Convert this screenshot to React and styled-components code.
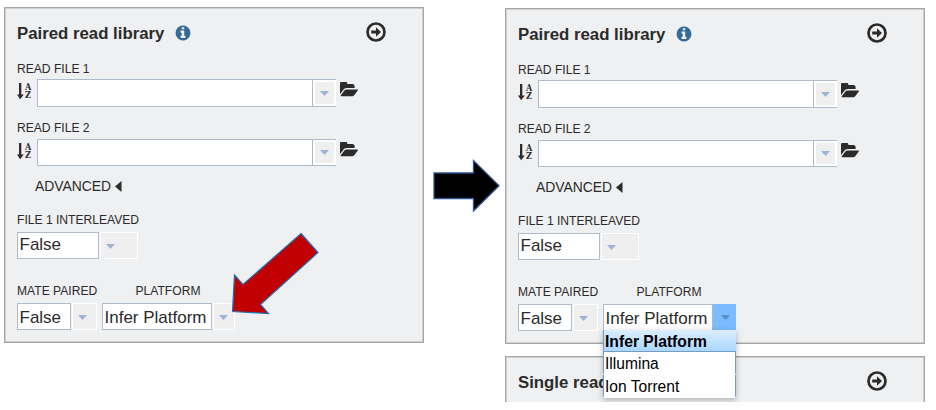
import React from "react";
import styled, { createGlobalStyle, css } from "styled-components";

const GlobalStyle = createGlobalStyle`
  * { box-sizing: border-box; }
  body {
    margin: 0;
    background: #fff;
    color: #2b2b2b;
    font-family: "Liberation Sans", Arial, sans-serif;
    overflow: hidden;
  }
  svg { display: block; flex: none; }
`;

const Page = styled.main`
  position: relative;
  display: flex;
  gap: 81px;
  width: 936px;
  height: 402px;
  padding-left: 4px;
  overflow: hidden;
`;

const Column = styled.div`
  display: flex;
  flex-direction: column;
  gap: 12px;
  width: 420px;
  padding-top: ${(p) => p.$top}px;
`;

const Panel = styled.section`
  flex: none;
  height: 336px;
  padding: 1px 1px 0 12px;
  background: #eff0f2;
  border: 1px solid #a6a6a6;
  box-shadow: inset 0 0 0 1px #cfcfd0;
`;

const Header = styled.header`
  display: flex;
  align-items: center;
  height: 47px;
  padding-right: 36px;
`;

const Title = styled.h2`
  margin: 0 11px 0 0;
  padding-top: 2px;
  font-size: 16.8px;
  line-height: 20px;
  font-weight: 700;
  white-space: nowrap;
`;

const Spacer = styled.div`
  flex: 1;
`;

const GoMark = styled.div`
  padding-bottom: 1px;
`;

const Label = styled.div`
  width: ${(p) => (p.$width ? p.$width + "px" : "auto")};
  height: 16px;
  font-size: 12.1px;
  line-height: 16px;
  white-space: nowrap;
`;

const FieldGroup = styled.div`
  height: ${(p) => p.$height}px;
  padding-top: ${(p) => p.$top}px;
`;

const FileRow = styled.div`
  display: flex;
  height: ${(p) => p.$height}px;
  margin-top: ${(p) => p.$gap}px;
`;

const SortMark = styled.div`
  display: flex;
  gap: 1px;
  width: 20px;
  padding-top: 3px;
`;

const SortLetters = styled.div`
  display: flex;
  flex-direction: column;
  font: 700 9px "DejaVu Serif", serif;
`;

const SortLetter = styled.span`
  height: 8px;
  line-height: 10px;
  transform: scaleX(0.9);
  transform-origin: left;
`;

const FileInput = styled.div`
  width: 276px;
  background: #fff;
  border: 1px solid #b0bacd;
`;

const FileTrigger = styled.div`
  display: flex;
  align-items: center;
  justify-content: center;
  width: 23px;
  margin-right: 4px;
  background: #efefef;
  border: solid #b0bacd;
  border-width: 1px 0;
  box-shadow: inset 0 0 0 2px #fff;
`;

const FolderMark = styled.div`
  padding-top: 3px;
`;

const Advanced = styled.div`
  display: flex;
  align-items: center;
  gap: 4px;
  height: 20px;
  margin-left: 18px;
  font-size: 13.9px;
`;

const SelectRow = styled.div`
  display: flex;
  margin-top: ${(p) => p.$gap}px;
`;

const SelectBox = styled.div`
  position: relative;
  display: flex;
  height: 27px;
  margin-right: 5px;
`;

const SelectValue = styled.div`
  width: ${(p) => p.$width}px;
  padding: ${(p) => p.$drop || 0}px 0 0 1.5px;
  background: #fff;
  border: 1px solid #b0bacd;
  font-size: 17px;
  line-height: 24px;
  white-space: nowrap;
`;

const SelectTrigger = styled.div`
  display: flex;
  align-items: center;
  width: ${(p) => p.$width}px;
  margin-left: 1px;
  padding: 2px 0 0 5px;
  background: #efefef;
  border: 1px solid #fff;
  ${(p) =>
    p.$open &&
    css`
      margin-left: 0;
      padding: 0 0 0 7px;
      background: #7abcff;
      border-color: #7abcff;
    `}
`;

const Menu = styled.ul`
  position: absolute;
  z-index: 2;
  top: 26px;
  left: 0;
  width: 133px;
  margin: 0;
  padding: 0;
  list-style: none;
  background: #fff;
  box-shadow: 0 2px 6px rgba(0, 0, 0, 0.28);
`;

const MenuItem = styled.li`
  height: 23px;
  padding-left: 1px;
  color: #000;
  font-size: 15.6px;
  line-height: 24px;
  white-space: nowrap;
  border: solid #759dc0;
  border-width: 0 1px;
  border-bottom: 2px solid #fff;
  ${(p) =>
    p.$selected &&
    css`
      height: 22px;
      font-size: 15.7px;
      font-weight: 700;
      line-height: 23px;
      background: linear-gradient(#dceeff, #abd6ff);
      border-color: #759dc0;
      border-width: 0 0 1px 1px;
    `}
`;

const RedArrow = styled.svg`
  position: absolute;
  left: 228px;
  top: 228px;
`;

const BlackArrow = styled.svg`
  position: absolute;
  left: 430px;
  top: 156px;
`;

const InfoIcon = () => (
  <svg width="16" height="16" viewBox="64 64 1664 1664" fill="#336b94">
    <path d="M1152 1376v-160q0-14-9-23t-23-9h-96v-512q0-14-9-23t-23-9h-320q-14 0-23 9t-9 23v160q0 14 9 23t23 9h96v320h-96q-14 0-23 9t-9 23v160q0 14 9 23t23 9h448q14 0 23-9t9-23zm-128-896v-160q0-14-9-23t-23-9h-192q-14 0-23 9t-9 23v160q0 14 9 23t23 9h192q14 0 23-9t9-23zm640 416q0 209-103 385.5t-279.5 279.5-385.5 103-385.5-103-279.5-279.5-103-385.5 103-385.5 279.5-279.5 385.5-103 385.5 103 279.5 279.5 103 385.5z" />
  </svg>
);

const GoIcon = () => (
  <svg width="20" height="20" viewBox="0 0 20 20">
    <circle cx="10" cy="10" r="8.5" fill="none" stroke="#2b2b2b" strokeWidth="2.7" />
    <path d="M5.2 8.4h4.8V5.2l5 4.8-5 4.8v-3.2H5.2z" fill="#2b2b2b" />
  </svg>
);

const FolderIcon = () => (
  <svg width="18" height="15" viewBox="0 200 1890 1400" preserveAspectRatio="none" fill="#2b2b2b">
    <path d="M1879 952q0 31-31 66l-336 396q-43 51-120.5 86.5t-143.5 35.5h-1088q-34 0-60.5-13t-26.5-43q0-31 31-66l336-396q43-51 120.5-86.5t143.5-35.5h1088q34 0 60.5 13t26.5 43zm-343-344v160h-832q-94 0-197 47.5t-164 119.5l-337 396-5 6q0-4-.5-12.5t-.5-12.5v-960q0-92 66-158t158-66h320q92 0 158 66t66 158v32h544q92 0 158 66t66 158z" />
  </svg>
);

const SortIcon = () => (
  <SortMark>
    <svg width="7" height="18" viewBox="0 0 7 18" fill="#2b2b2b">
      <path d="M2 1h2.3v11.6h2.5L3.15 17.2 0 12.6h2z" />
    </svg>
    <SortLetters>
      <SortLetter>A</SortLetter>
      <SortLetter>Z</SortLetter>
    </SortLetters>
  </SortMark>
);

const Caret = ({ color = "#9db3d8" }) => (
  <svg width="9" height="5" viewBox="0 0 9 5">
    <path d="M0 0h9L4.5 5z" fill={color} />
  </svg>
);

const CollapseIcon = () => (
  <svg width="7" height="11" viewBox="0 0 7 11">
    <path d="M6.5 0v11L0 5.5z" fill="#2b2b2b" />
  </svg>
);

const FileField = ({ label, height, rowHeight, top, gap }) => (
  <FieldGroup $height={height} $top={top}>
    <Label>{label}</Label>
    <FileRow $height={rowHeight} $gap={gap}>
      <SortIcon />
      <FileInput />
      <FileTrigger>
        <Caret />
      </FileTrigger>
      <FolderMark>
        <FolderIcon />
      </FolderMark>
    </FileRow>
  </FieldGroup>
);

const Select = ({ value, width, triggerWidth, drop, options }) => (
  <SelectBox>
    <SelectValue $width={width} $drop={drop}>
      {value}
    </SelectValue>
    <SelectTrigger $width={triggerWidth} $open={!!options}>
      <Caret color={options ? "#5b8fc4" : undefined} />
    </SelectTrigger>
    {options && (
      <Menu>
        {options.map((option) => (
          <MenuItem key={option} $selected={option === value}>
            {option}
          </MenuItem>
        ))}
      </Menu>
    )}
  </SelectBox>
);

const PanelHeader = ({ title, info }) => (
  <Header>
    <Title>{title}</Title>
    {info && <InfoIcon />}
    <Spacer />
    <GoMark>
      <GoIcon />
    </GoMark>
  </Header>
);

const PairedLibrary = ({ options }) => (
  <Panel>
    <PanelHeader title="Paired read library" info />
    <FileField label="READ FILE 1" top={5} gap={2} height={58} rowHeight={28} />
    <FileField label="READ FILE 2" top={6} gap={3} height={62} rowHeight={27} />
    <Advanced>
      ADVANCED
      <CollapseIcon />
    </Advanced>
    <FieldGroup $top={16} $height={72}>
      <Label>FILE 1 INTERLEAVED</Label>
      <SelectRow $gap={4}>
        <Select value="False" width={82} triggerWidth={38} />
      </SelectRow>
    </FieldGroup>
    <FieldGroup $top={15} $height={60}>
      <SelectRow $gap={0}>
        <Label $width={118.5}>MATE PAIRED</Label>
        <Label>PLATFORM</Label>
      </SelectRow>
      <SelectRow $gap={4}>
        <Select value="False" width={54} triggerWidth={25} drop={2} />
        <Select
          value="Infer Platform"
          width={110}
          triggerWidth={options ? 23 : 22}
          drop={2}
          options={options}
        />
      </SelectRow>
    </FieldGroup>
  </Panel>
);

export default function App() {
  return (
    <>
      <GlobalStyle />
      <Page>
        <Column $top={7}>
          <PairedLibrary />
        </Column>
        <Column $top={8}>
          <PairedLibrary options={["Infer Platform", "Illumina", "Ion Torrent"]} />
          <Panel>
            <PanelHeader title="Single read library" />
          </Panel>
        </Column>
        <RedArrow width="94" height="90" viewBox="228 228 94 90">
          <path
            d="M301 233.5L318 252.5L260.5 304.5L268.5 313.5L232.5 311.5L234.5 275L243 284.5Z"
            fill="#c00000"
            stroke="#1f70b5"
            strokeWidth="1.2"
          />
        </RedArrow>
        <BlackArrow width="72" height="60" viewBox="430 156 72 60">
          <path
            d="M434 173H473.5V160.5L499 185.7L473.5 211V198.5H434Z"
            fill="#000"
            stroke="#2f528f"
            strokeWidth="1.3"
          />
        </BlackArrow>
      </Page>
    </>
  );
}
